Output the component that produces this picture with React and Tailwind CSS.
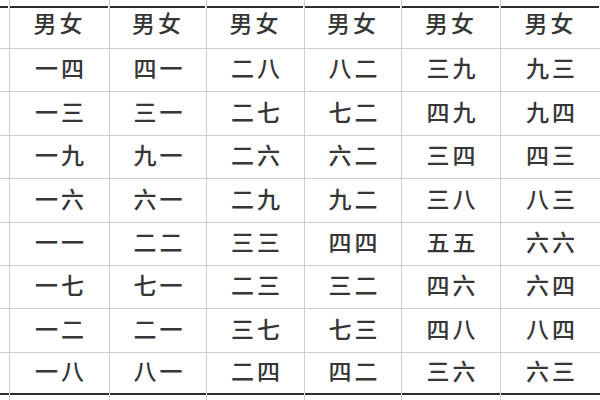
const widths = ['w-[10px]', 'w-[100px]', 'w-[97px]', 'w-[98px]', 'w-[97px]', 'w-[99px]', 'w-[99px]'];

const rows = [
  ['一四', '四一', '二八', '八二', '三九', '九三'],
  ['一三', '三一', '二七', '七二', '四九', '九四'],
  ['一九', '九一', '二六', '六二', '三四', '四三'],
  ['一六', '六一', '二九', '九二', '三八', '八三'],
  ['一一', '二二', '三三', '四四', '五五', '六六'],
  ['一七', '七一', '二三', '三二', '四六', '六四'],
  ['一二', '二一', '三七', '七三', '四八', '八四'],
  ['一八', '八一', '二四', '四二', '三六', '六三'],
];

const heights = ['h-[43px]', 'h-[44px]', 'h-[43px]', 'h-[44px]', 'h-[43px]', 'h-[43px]', 'h-[44px]', 'h-[40px]'];

const Cell = ({ i, children }) => (
  <div
    className={`${widths[i]} shrink-0 h-full flex items-center justify-center pb-[5px] ${
      i < 6 ? 'border-r border-[#cdcdcd]' : ''
    }`}
  >
    {children}
  </div>
);

const App = () => {
  return (
    <div
      className="w-[600px] h-[400px] overflow-hidden bg-white text-[#363636] text-[23px] font-medium tracking-[3px]"
      style={{ fontFamily: '"Noto Sans CJK SC", "Noto Sans", sans-serif' }}
    >
      {/* top spacer */}
      <div className="flex h-[6px]">
        {widths.map((_, i) => (
          <Cell key={i} i={i} />
        ))}
      </div>

      {/* header */}
      <div className="flex h-[43px] border-b border-[#cdcdcd]">
        {widths.map((w, i) => (
          <div
            key={i}
            className={`${w} shrink-0 h-full flex flex-col ${i < 6 ? 'border-r border-[#cdcdcd]' : ''}`}
          >
            <div className="h-[2px] bg-[#2e2e2e] mr-[1px]" />
            <div className="flex-1 flex items-center justify-center pb-[11px] leading-none">
              {i > 0 ? '男女' : ''}
            </div>
          </div>
        ))}
      </div>

      {/* rows */}
      {rows.map((r, ri) => (
        <div
          key={ri}
          className={`flex ${heights[ri]} ${ri < rows.length - 1 ? 'border-b border-[#cdcdcd]' : ''}`}
        >
          <Cell i={0} />
          {r.map((t, ci) => (
            <Cell key={ci} i={ci + 1}>
              <span className="leading-none pl-[3px]">{t}</span>
            </Cell>
          ))}
        </div>
      ))}

      {/* bottom rule */}
      <div className="flex h-[2px]">
        {widths.map((w, i) => (
          <div key={i} className={`${w} shrink-0 h-full bg-[#2e2e2e] ${i < 6 ? 'border-r border-white' : ''}`} />
        ))}
      </div>
      <div className="flex h-[6px]">
        {widths.map((_, i) => (
          <Cell key={i} i={i} />
        ))}
      </div>
    </div>
  );
};

export default App;
